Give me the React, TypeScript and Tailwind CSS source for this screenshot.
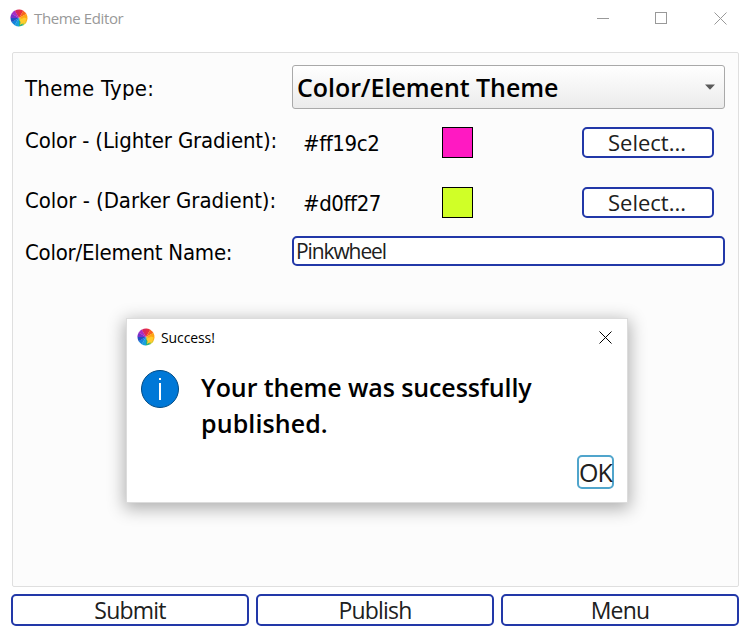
import React from "react";

const label = "font-['DejaVu_Sans_Condensed','DejaVu_Sans',sans-serif] [font-stretch:condensed] text-[22px] leading-[28px] text-black whitespace-nowrap";
const body = "font-['Open_Sans',sans-serif] whitespace-nowrap";

const wheelColors = [
  "#e83040", "#f8641c", "#ffa414", "#ffb01c", "#a6c83c", "#28b07c",
  "#18a0dc", "#1484dc", "#2050c0", "#7830c8", "#a82cc4", "#d82860",
];

function Wheel() {
  return (
    <svg width="18" height="18" viewBox="-9 -9 18 18" className="shrink-0">
      {wheelColors.map((color, i) => {
        const a = ((i * 30 - 90) * Math.PI) / 180;
        const b = ((i * 30 - 59) * Math.PI) / 180;
        const r = 8.5;
        return (
          <path
            key={i}
            fill={color}
            d={`M0 0L${r * Math.cos(a)} ${r * Math.sin(a)}A${r} ${r} 0 0 1 ${r * Math.cos(b)} ${r * Math.sin(b)}Z`}
          />
        );
      })}
      <path d="M0 1.5L3 1L5 -.5L7.5 .5L6.5 3.5L6.5 6L4 5.2L1 7L1.5 4Z" fill="#ffcc2c" />
    </svg>
  );
}

function Cross({ color }: { color: string }) {
  return (
    <svg width="13" height="13" viewBox="0 0 13 13" className="shrink-0">
      <path d="M.5 .5L12.5 12.5M12.5 .5L.5 12.5" stroke={color} strokeWidth="1" />
    </svg>
  );
}

function ColorRow({ name, value, swatch, nameSpacing }: {
  name: string; value: string; swatch: string; nameSpacing: string;
}) {
  return (
    <div className="flex h-[31px]">
      <div className={`${label} ${nameSpacing} w-[279px] shrink-0 pl-3`}>{name}</div>
      <div className={`${label} mt-[3px] w-[150px] shrink-0 pl-[11px] tracking-[-0.4px]`}>{value}</div>
      <div className={`${swatch} h-[31px] w-[31px] border border-black`} />
      <button className={`${body} ml-[109px] flex h-[31px] w-[132px] items-center justify-center rounded-[5px] border-2 border-[#2238a8] bg-white pr-0.5 text-[22px] leading-[27px] text-[#202020]`}>
        Select...
      </button>
    </div>
  );
}

export default function App() {
  return (
    <div className="relative flex h-[637px] w-[748px] flex-col overflow-hidden bg-white">
      <header className="flex h-[52px] shrink-0 items-start pl-[10px] pr-[21px]">
        <div className="flex h-9 grow items-center">
          <Wheel />
          <span className={`${body} ml-1.5 text-[15px] tracking-[-0.38px] text-[#999999]`}>Theme Editor</span>
        </div>
        <div className="flex h-9 items-center">
          <div className="h-px w-3 bg-[#999]" />
          <div className="ml-[46px] h-3 w-3 border border-[#999]" />
          <div className="ml-[47px]"><Cross color="#999999" /></div>
        </div>
      </header>

      <main className="mx-3 flex h-[535px] w-[727px] shrink-0 flex-col rounded-[2px] border border-[#dfdfdf] bg-[#fcfcfc] pt-3">
        <div className="flex h-11">
          <div className={`${label} w-[279px] shrink-0 pl-3 pt-[10px] tracking-[0.25px]`}>Theme Type:</div>
          <div className="flex h-11 w-[433px] items-center justify-between rounded-[3px] border border-[#a9a9a9] bg-linear-to-b from-white to-[#ebebeb] pl-1 pr-[9px]">
            <span className="whitespace-nowrap pt-0.5 font-['Open_Sans',sans-serif] text-[25px] font-semibold tracking-[-0.05px] text-black">Color/Element Theme</span>
            <svg width="10" height="6" viewBox="0 0 10 6"><path d="M0 .5H10L5 5.8Z" fill="#5a5a5a" /></svg>
          </div>
        </div>
        <div className="mt-[18px]">
          <ColorRow name="Color - (Lighter Gradient):" value="#ff19c2" swatch="bg-[#ff19c2]" nameSpacing="tracking-[-0.13px]" />
        </div>
        <div className="mt-[29px]">
          <ColorRow name="Color - (Darker Gradient):" value="#d0ff27" swatch="bg-[#d0ff27]" nameSpacing="tracking-[-0.05px]" />
        </div>
        <div className="mt-[18px] flex h-[30px]">
          <div className={`${label} w-[279px] shrink-0 pl-3 pt-[3px] tracking-[-0.23px]`}>Color/Element Name:</div>
          <div className={`${body} h-[30px] w-[433px] rounded-[5px] border-2 border-[#2238a8] bg-white pl-0.5 text-[21px] leading-[27px] tracking-[-1.1px] text-[#202020]`}>Pinkwheel</div>
        </div>
      </main>

      <footer className={`${body} ml-[11px] mt-[7px] flex h-8 w-[728px] shrink-0 gap-[7px] text-[23px] leading-[28px] tracking-[-0.8px] text-[#202020]`}>
        {["Submit", "Publish", "Menu"].map((text) => (
          <button key={text} className="flex h-8 w-[238px] items-center justify-center rounded-[5px] border-2 border-[#2238a8] bg-white">
            {text}
          </button>
        ))}
      </footer>

      <section className="absolute left-[126px] top-[318px] flex h-[185px] w-[502px] flex-col border border-[#dcdcdc] bg-white shadow-[0_4px_16px_2px_rgba(0,0,0,0.3)]">
        <div className="flex h-9 shrink-0 items-center pl-[10px] pr-[15px]">
          <Wheel />
          <span className={`${body} ml-1.5 grow text-[14px] tracking-[-0.1px] text-black`}>Success!</span>
          <Cross color="#000000" />
        </div>
        <div className="flex pl-[14px] pt-[15px]">
          <svg width="38" height="38" viewBox="0 0 38 38" className="shrink-0">
            <circle cx="19" cy="19" r="18.5" fill="#0078d7" stroke="#004a83" />
            <path d="M19 13V30M19 8V10" stroke="#fff" strokeWidth="2" />
          </svg>
          <p className="-mt-px ml-[22px] whitespace-nowrap font-['Open_Sans',sans-serif] text-[25px] font-semibold leading-[36px] tracking-[-0.1px] text-black">
            Your theme was sucessfully<br /><span className="tracking-[0.1px]">published.</span>
          </p>
        </div>
        <button className={`${body} mb-[13px] ml-auto mr-[13px] mt-auto flex h-[34px] w-[37px] items-center justify-center rounded-[5px] border-2 border-[#50a5cc] bg-white text-[25px] leading-[30px] tracking-[-1px] text-[#202020]`}>
          OK
        </button>
      </section>
    </div>
  );
}
